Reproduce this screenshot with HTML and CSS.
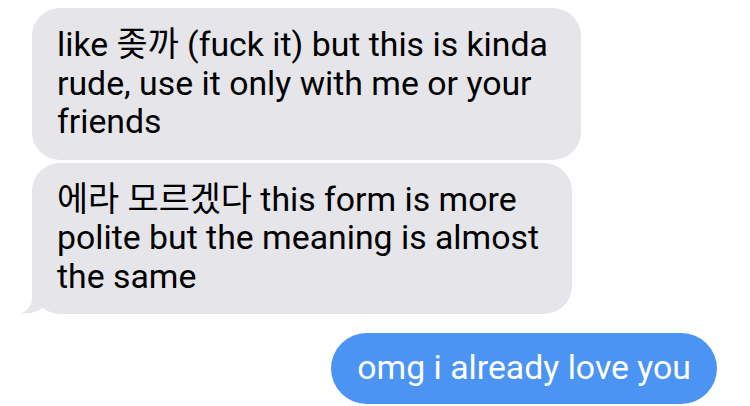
FILE: index.html
```html
<!DOCTYPE html>
<html lang="en">
<head>
    <meta charset="UTF-8">
    <title>Messages</title>
    <link rel="stylesheet" href="styles.css">
</head>
<body>
<div class="thread">
    <div class="bubble received">like 좆까 (fuck it) but this is kinda<br>rude, use it only with me or your<br>friends</div>
    <div class="bubble received last">
        에라 모르겠다 this form is more<br>polite but the meaning is almost<br>the same
        <svg class="tail" width="30" height="26" viewBox="0 0 30 26">
            <path d="M10 0 L10 10 C10 17 6 22 0 25 C8 26 15 24 20 20 L30 20 L30 0 Z" fill="#e5e5ea"/>
        </svg>
    </div>
    <div class="bubble sent">omg i already love you</div>
</div>
</body>
</html>
```

FILE: styles.css
```css
/* Chat thread */
body {
    margin: 0;
    background-color: #ffffff;
    font-family: Roboto, "Noto Sans CJK KR", sans-serif;
}

.thread {
    display: flex;
    flex-direction: column;
    padding: 8px 33px 0 32px;
    gap: 3px;
}

.bubble {
    position: relative;
    width: fit-content;
    font-size: 33.8px;
    line-height: 38.5px;
    padding: 18px 25px;
    border-radius: 28px;
}

.received {
    padding-right: 33px;
    background-color: #e5e5ea;
    color: #000;
}

.received .tail {
    position: absolute;
    left: -10px;
    bottom: 0;
}

.sent {
    align-self: flex-end;
    margin-top: 16px;
    background-color: #4b94f4;
    color: #fff;
    padding: 16px 26px;
    border-radius: 36px;
}
```
